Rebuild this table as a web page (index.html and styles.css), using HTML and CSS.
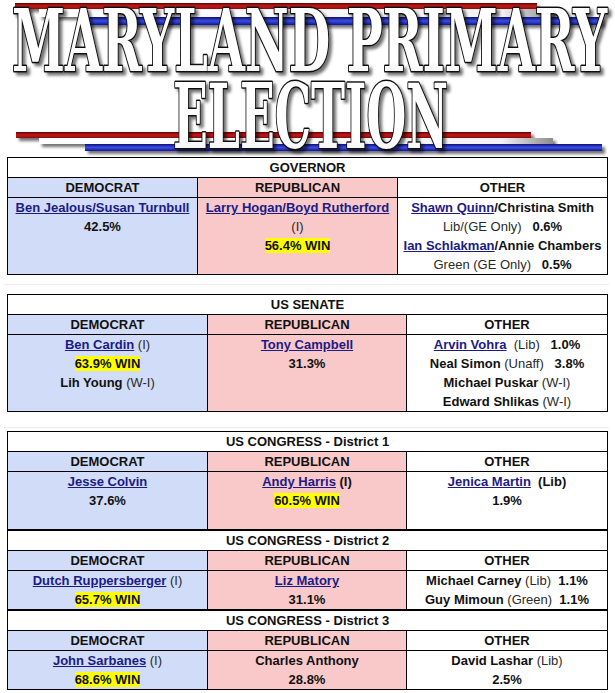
FILE: index.html
```html
<!DOCTYPE html>
<html lang="en">
<head>
<meta charset="utf-8">
<title>Maryland Primary Election</title>
<link rel="stylesheet" href="styles.css">
</head>
<body>
<svg class="banner" width="615" height="157" viewBox="0 0 615 157" xmlns="http://www.w3.org/2000/svg">
  <defs>
    <linearGradient id="gRed" x1="0" y1="0" x2="0" y2="1">
      <stop offset="0" stop-color="#6a0000"/>
      <stop offset="0.5" stop-color="#c41c1c"/>
      <stop offset="1" stop-color="#8a0808"/>
    </linearGradient>
    <linearGradient id="gBlue" x1="0" y1="0" x2="0" y2="1">
      <stop offset="0" stop-color="#10107a"/>
      <stop offset="0.5" stop-color="#3a4ee2"/>
      <stop offset="1" stop-color="#14148e"/>
    </linearGradient>
    <linearGradient id="gWhite" x1="0" y1="0" x2="1" y2="0">
      <stop offset="0" stop-color="#ffffff"/>
      <stop offset="0.9" stop-color="#f2f2f2"/>
      <stop offset="1" stop-color="#8c8c8c"/>
    </linearGradient>
    <linearGradient id="gLetter" x1="0" y1="0" x2="0" y2="1">
      <stop offset="0" stop-color="#ffffff"/>
      <stop offset="0.7" stop-color="#ffffff"/>
      <stop offset="1" stop-color="#e4e4e4"/>
    </linearGradient>
    <filter id="fShadow" x="-5%" y="-20%" width="115%" height="150%">
      <feDropShadow dx="3" dy="3" stdDeviation="1.6" flood-color="#000" flood-opacity="0.55"/>
    </filter>
  </defs>
  <g filter="url(#fShadow)">
    <rect x="15" y="3" width="522" height="6" fill="url(#gRed)"/>
    <rect x="39" y="9" width="514" height="8" fill="url(#gWhite)"/>
    <rect x="85" y="17" width="517" height="8" fill="url(#gBlue)"/>
    <rect x="16" y="132" width="515" height="6" fill="url(#gRed)"/>
    <rect x="39" y="138" width="514" height="6" fill="url(#gWhite)"/>
    <rect x="85" y="144" width="517" height="7" fill="url(#gBlue)"/>
  </g>
  <text class="title title-top" x="12" y="71" textLength="595" lengthAdjust="spacingAndGlyphs" filter="url(#fShadow)">MARYLAND PRIMARY</text>
  <text class="title title-bottom" x="173" y="148" textLength="275" lengthAdjust="spacingAndGlyphs" filter="url(#fShadow)">ELECTION</text>
</svg>

<table class="race race-gov">
  <colgroup><col class="c-gov-d"><col class="c-gov-r"><col class="c-gov-o"></colgroup>
  <tr><td class="office" colspan="3">GOVERNOR</td></tr>
  <tr><td class="dem">DEMOCRAT</td><td class="rep">REPUBLICAN</td><td class="oth">OTHER</td></tr>
  <tr>
    <td class="dem"><a href="#">Ben Jealous/Susan Turnbull</a><br>42.5%</td>
    <td class="rep"><a href="#">Larry Hogan/Boyd Rutherford</a><br><span class="n">(I)</span><br><mark>56.4% WIN</mark></td>
    <td class="oth"><a href="#">Shawn Quinn</a>/Christina Smith<br><span class="n">Lib/(GE Only)</span>&nbsp;&nbsp; 0.6%<br><a href="#">Ian Schlakman</a>/Annie Chambers<br><span class="n">Green (GE Only)</span>&nbsp;&nbsp; 0.5%</td>
  </tr>
</table>

<div class="sep sep-a"></div>

<table class="race">
  <colgroup><col class="c-d"><col class="c-r"><col class="c-o"></colgroup>
  <tr><td class="office" colspan="3">US SENATE</td></tr>
  <tr><td class="dem">DEMOCRAT</td><td class="rep">REPUBLICAN</td><td class="oth">OTHER</td></tr>
  <tr>
    <td class="dem"><a href="#">Ben Cardin</a> <span class="n">(I)</span><br><mark>63.9% WIN</mark><br>Lih Young <span class="n">(W-I)</span></td>
    <td class="rep"><a href="#">Tony Campbell</a><br>31.3%</td>
    <td class="oth"><a href="#">Arvin Vohra</a>&nbsp; <span class="n">(Lib)</span>&nbsp;&nbsp; 1.0%<br>Neal Simon <span class="n">(Unaff)</span>&nbsp;&nbsp; 3.8%<br>Michael Puskar <span class="n">(W-I)</span><br>Edward Shlikas <span class="n">(W-I)</span></td>
  </tr>
</table>

<div class="sep sep-b"></div>

<table class="race">
  <colgroup><col class="c-d"><col class="c-r"><col class="c-o"></colgroup>
  <tr><td class="office" colspan="3">US CONGRESS - District 1</td></tr>
  <tr><td class="dem">DEMOCRAT</td><td class="rep">REPUBLICAN</td><td class="oth">OTHER</td></tr>
  <tr class="three">
    <td class="dem"><a href="#">Jesse Colvin</a><br>37.6%</td>
    <td class="rep"><a href="#">Andy Harris</a> (I)<br><mark>60.5% WIN</mark></td>
    <td class="oth"><a href="#">Jenica Martin</a>&nbsp; (Lib)<br>1.9%</td>
  </tr>
</table>
<table class="race">
  <colgroup><col class="c-d"><col class="c-r"><col class="c-o"></colgroup>
  <tr><td class="office" colspan="3">US CONGRESS - District 2</td></tr>
  <tr><td class="dem">DEMOCRAT</td><td class="rep">REPUBLICAN</td><td class="oth">OTHER</td></tr>
  <tr>
    <td class="dem"><a href="#">Dutch Ruppersberger</a> <span class="n">(I)</span><br><mark>65.7% WIN</mark></td>
    <td class="rep"><a href="#">Liz Matory</a><br>31.1%</td>
    <td class="oth">Michael Carney <span class="n">(Lib)</span>&nbsp; 1.1%<br>Guy Mimoun <span class="n">(Green)</span>&nbsp; 1.1%</td>
  </tr>
</table>
<table class="race">
  <colgroup><col class="c-d"><col class="c-r"><col class="c-o"></colgroup>
  <tr><td class="office" colspan="3">US CONGRESS - District 3</td></tr>
  <tr><td class="dem">DEMOCRAT</td><td class="rep">REPUBLICAN</td><td class="oth">OTHER</td></tr>
  <tr>
    <td class="dem"><a href="#">John Sarbanes</a> <span class="n">(I)</span><br><mark>68.6% WIN</mark></td>
    <td class="rep">Charles Anthony<br>28.8%</td>
    <td class="oth">David Lashar <span class="n">(Lib)</span><br>2.5%</td>
  </tr>
</table>
</body>
</html>
```

FILE: styles.css
```css
html, body {
  margin: 0;
  padding: 0;
  background: #ffffff;
}

body {
  font-family: "Liberation Sans", Arial, sans-serif;
  font-size: 13px;
  font-weight: bold;
  line-height: 19px;
  color: #111111;
}

.banner {
  display: block;
}

.title {
  font-family: "DejaVu Serif Condensed", "DejaVu Serif", serif;
  font-stretch: condensed;
  font-weight: bold;
  fill: url(#gLetter);
  stroke: #111111;
  stroke-width: 3px;
  stroke-linejoin: round;
  paint-order: stroke fill;
}

.title-top {
  font-size: 86px;
}

.title-bottom {
  font-size: 90px;
}

.race {
  border-collapse: collapse;
  table-layout: fixed;
  width: 600px;
  margin-left: 7px;
}

.race td {
  border: 1px solid #000000;
  padding: 0;
  text-align: center;
  vertical-align: top;
  line-height: 19px;
  height: 19px;
  white-space: nowrap;
}

.c-gov-d { width: 190px; }
.c-gov-r { width: 200px; }
.c-gov-o { width: 210px; }

.c-d { width: 200px; }
.c-r { width: 199px; }
.c-o { width: 201px; }

.office {
  background: #ffffff;
}

.dem {
  background: #d1dcf8;
}

.rep {
  background: #f9c8c8;
}

.oth {
  background: #ffffff;
}

.three td {
  height: 57px;
}

a {
  color: #1b1b86;
  text-decoration: underline;
}

.n {
  font-weight: normal;
  color: #2a2a2a;
}

mark {
  background: #ffff00;
  color: #111111;
}

.sep {
  height: 1px;
  background: #ededed;
  margin-left: 4px;
  margin-right: 6px;
}

.sep-a {
  margin-top: 9px;
  margin-bottom: 9px;
}

.sep-b {
  margin-top: 15px;
  margin-bottom: 3px;
}
```
